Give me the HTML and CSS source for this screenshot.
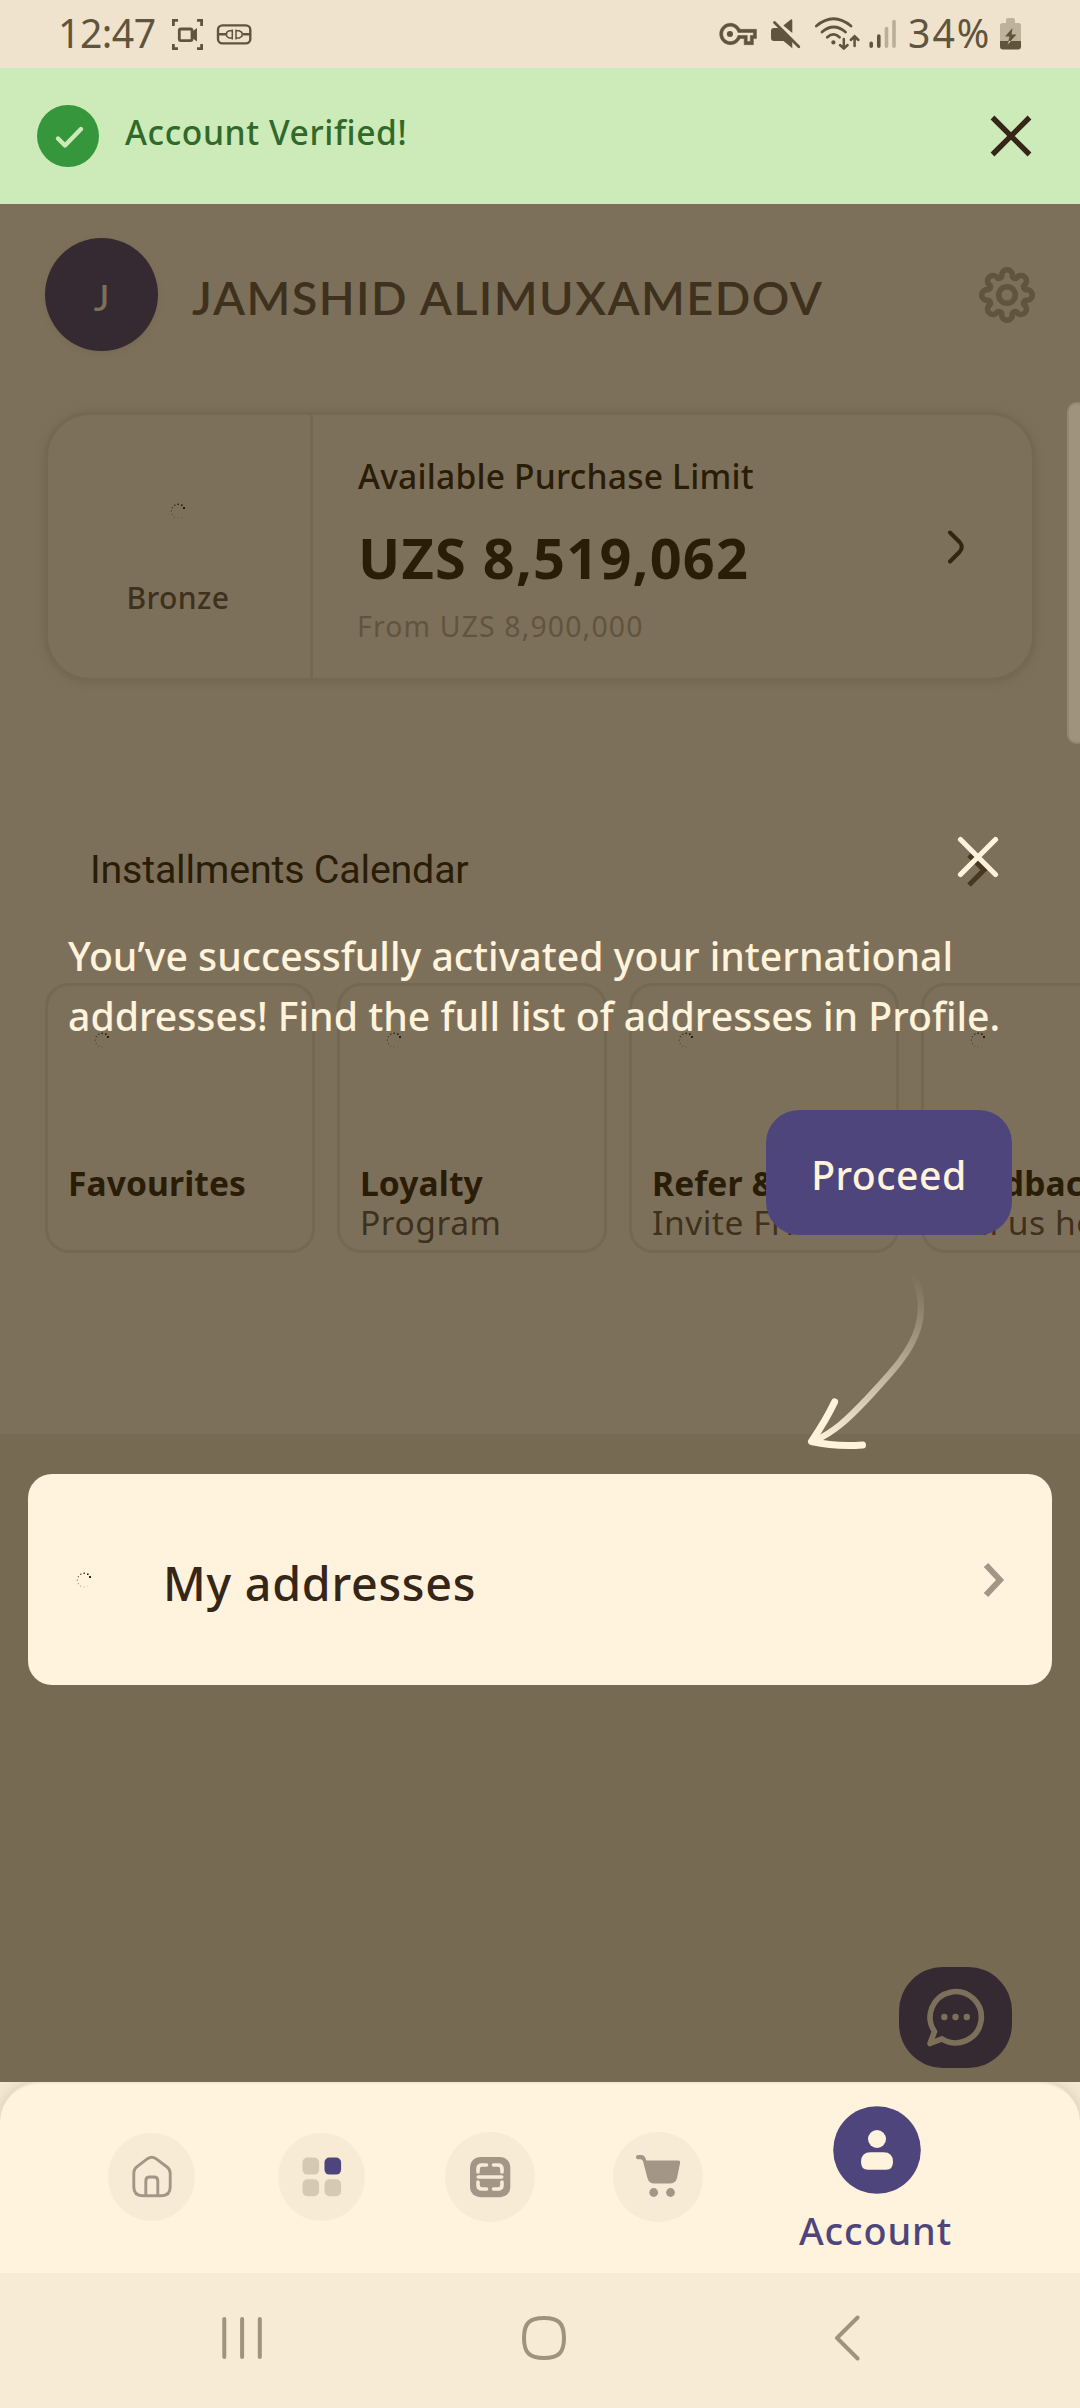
FILE: index.html
```html
<!DOCTYPE html>
<html lang="en">
<head>
<meta charset="utf-8">
<title>Account</title>
<link rel="stylesheet" href="styles.css">
</head>
<body>
<svg class="defs" width="0" height="0">
  <symbol id="spinner" viewBox="0 0 16 16">
    <rect x="13" y="4" width="2" height="2" opacity="1"/>
    <rect x="11" y="1.4" width="1.6" height="1.6" opacity="1"/>
    <rect x="7.4" y="0.6" width="1.6" height="1.4" opacity=".9"/>
    <rect x="4" y="1.6" width="1.5" height="1.3" opacity=".75"/>
    <rect x="1.8" y="4" width="1.2" height="1.3" opacity=".65"/>
    <rect x="0.8" y="7.5" width="1.1" height="1.3" opacity=".55"/>
    <rect x="1.8" y="11" width="1.1" height="1.2" opacity=".45"/>
    <rect x="4" y="13.6" width="1.1" height="1.1" opacity=".35"/>
    <rect x="7.5" y="14.4" width="1.1" height="1.1" opacity=".25"/>
    <rect x="11" y="13.6" width="1.1" height="1.1" opacity=".15"/>
  </symbol>
</svg>
<div class="screen">
  <div class="statusbar">
    <span class="time">12:47</span>
    <svg width="82" height="68" viewBox="172 0 82 68" fill="none" stroke="#61543c" stroke-width="2.8">
      <path d="M173.400 26V20.400H178M197 20.400H201.600V26M201.600 44V48.600H197M178 48.600H173.400V44"/>
      <rect x="179.300" y="29" width="12.700" height="11.600" rx="1.500"/>
      <path d="M192 32.500L196.200 29.500V40L192 37" fill="#61543c" stroke-width="1.500"/>
      <rect x="218" y="25.400" width="32.300" height="18" rx="4.500" stroke-width="2.400"/>
      <path d="M218 34.300H226M242.500 34.300H250" stroke-width="2.400"/>
      <path d="M232.300 29.500V39.500M232.300 30.800H229L226.600 32.500V36.200L229 38H232.300M236 29.500V39.500M236 30.800H239.400L242 32.500V36.200L239.400 38H236" stroke-width="1.500"/>
    </svg>
    <svg class="status-right" width="190" height="68" viewBox="715 0 190 68" fill="none" stroke="#61543c">
      <g transform="translate(719.700 15.600) scale(1.530)" fill="#61543c" stroke="none">
        <path fill-rule="evenodd" d="M22 19h-6v-4h-2.680c-1.140 2.420-3.600 4-6.320 4-3.860 0-7-3.140-7-7s3.140-7 7-7c2.720 0 5.170 1.580 6.320 4H24v6h-2v4zm-4-2h2v-4h2v-2H11.940l-.23-.67C11.010 8.340 9.110 7 7 7c-2.760 0-5 2.240-5 5s2.240 5 5 5c2.110 0 4.010-1.340 4.710-3.330l.23-.67H18v4z" stroke="#61543c" stroke-width=".35"/>
        <circle cx="6.700" cy="12" r="2"/>
      </g>
      <g fill="#61543c" stroke="none">
        <path d="M774 28h4.500L792.300 41.500V48.300L783.500 41H774q-3 0-3-3v-7q0-3 3-3zM783.300 25.500L790.500 19.700q1.800-1 1.800 1V33z"/>
      </g>
      <path d="M774.500 22.500L798.800 46.800" stroke-width="2.800" stroke-linecap="round"/>
      <g stroke-width="2.800" stroke-linecap="round">
        <path d="M816.300 26Q833.500 11.500 851 26M822 32Q833.500 22 845.500 32M827.300 37.300Q833.500 31.500 839.500 37.300"/>
        <path d="M843.800 39V48.500M840 45L843.800 48.600L847.600 45M854.600 46V36.500M850.800 40L854.600 36.300L858.400 40" stroke-width="2.500"/>
      </g>
      <circle cx="833.400" cy="42.400" r="2.100" fill="#61543c" stroke="none"/>
      <g stroke-width="3.600" stroke-linecap="round">
        <path d="M871.200 43.300V46.300M878.800 36V46.300"/>
        <path d="M886.500 28.500V46.300M894 21.500V46.300" stroke="#bbae97"/>
      </g>
    </svg>
    <span class="percent">34%</span>
    <svg width="21" height="68" viewBox="0 0 21 68">
      <path d="M6 20q0-2 2-2h5q2 0 2 2v3h3.500q2.500 0 2.500 2.500V41H0V25.500Q0 23 2.500 23H6z" fill="#bfb29b"/>
      <path d="M0 41H21V46.500q0 3-3 3H3q-3 0-3-3z" fill="#61543c"/>
      <path d="M12.500 28L5 36.500H9.500L7.500 44.500L16.500 34.500H11.500z" fill="#61543c"/>
      <path d="M9.100 41L7.500 44.500L10.800 41z" fill="#f0e3cd"/>
    </svg>
  </div>

  <div class="banner">
    <svg width="62" height="62" viewBox="0 0 62 62">
      <circle cx="31" cy="31" r="31" fill="#36963b"/>
      <path d="M21 33.500L28 40.500L44 24" fill="none" stroke="#cdebb9" stroke-width="4.400" stroke-linecap="round" stroke-linejoin="round"/>
    </svg>
    <span class="banner-text">Account Verified!</span>
    <svg width="42" height="42" viewBox="0 0 42 42" fill="none" stroke="#352617" stroke-width="5.400"><path d="M2.500 2.500L39.500 39.500M39.500 2.500L2.500 39.500"/></svg>
  </div>

  <main class="content">
    <div class="profile">
      <div class="avatar">J</div>
      <h1 class="name">JAMSHID ALIMUXAMEDOV</h1>
      <svg width="56" height="56" viewBox="-28 -28 56 56" fill="none" stroke="#61543f" stroke-width="5.600" stroke-linejoin="round">
        <path d="M18.790-5.210A5.340 5.340 0 1 1 18.790 5.210A3 3 0 0 0 16.970 9.600A5.340 5.340 0 1 1 9.600 16.970A3 3 0 0 0 5.210 18.790A5.340 5.340 0 1 1-5.210 18.790A3 3 0 0 0-9.600 16.970A5.340 5.340 0 1 1-16.970 9.600A3 3 0 0 0-18.790 5.210A5.340 5.340 0 1 1-18.790-5.210A3 3 0 0 0-16.970-9.600A5.340 5.340 0 1 1-9.600-16.970A3 3 0 0 0-5.210-18.790A5.340 5.340 0 1 1 5.210-18.790A3 3 0 0 0 9.600-16.970A5.340 5.340 0 1 1 16.970-9.600A3 3 0 0 0 18.790-5.210Z"/>
        <circle r="8.300"/>
      </svg>
    </div>

    <section class="limit-card">
      <div class="tier">
        <svg class="spinner" width="16" height="16" fill="#2a1d08"><use href="#spinner"/></svg>
        <span class="tier-name">Bronze</span>
      </div>
      <div class="limit">
        <div class="limit-text">
          <div class="limit-label">Available Purchase Limit</div>
          <div class="limit-value">UZS 8,519,062</div>
          <div class="limit-from">From UZS 8,900,000</div>
        </div>
        <svg width="18" height="36" viewBox="0 0 18 36" fill="none" stroke="#33260f" stroke-width="4" stroke-linecap="round"><path d="M3 3.500L12.500 13Q17 18 12.500 23L3 32.500"/></svg>
      </div>
    </section>

    <div class="calendar-row">
      <span>Installments Calendar</span>
      <svg width="21" height="34" viewBox="0 0 21 34" fill="none" stroke="#46391f" stroke-width="5"><path d="M2 2L17 17L2 32"/></svg>
    </div>

    <div class="tiles">
      <div class="tile"><svg class="spinner" width="16" height="16"><use href="#spinner"/></svg><b>Favourites</b><span></span></div>
      <div class="tile"><svg class="spinner" width="16" height="16"><use href="#spinner"/></svg><b>Loyalty</b><span>Program</span></div>
      <div class="tile"><svg class="spinner" width="16" height="16"><use href="#spinner"/></svg><b>Refer &amp;</b><span>Invite Friends</span></div>
      <div class="tile"><svg class="spinner" width="16" height="16"><use href="#spinner"/></svg><b>Feedback</b><span>Tell us how</span></div>
    </div>

    <section class="menu">
      <div class="menu-item">
        <svg width="16" height="16" fill="#352617"><use href="#spinner"/></svg>
        <span>My addresses</span>
        <svg width="22" height="36" viewBox="0 0 22 36" fill="none" stroke="#a39686" stroke-width="6"><path d="M3 3L17 18L3 33"/></svg>
      </div>
    </section>
  </main>

  <div class="tabs-area">
  <nav class="tabs">
    <div class="tab"><svg width="87" height="88" viewBox="107.500 2133 87 88" fill="none" stroke="#a39686" stroke-width="2.900">
      <path d="M133.300 2173Q133.300 2169.500 136 2167L147 2158.700Q151.200 2155.800 155.500 2158.700L166.500 2167Q169.700 2169.500 169.700 2173V2187Q169.700 2195.700 161 2195.700H142Q133.300 2195.700 133.300 2187ZM145.300 2195.500V2181Q145.300 2177 149 2177H153.500Q157.300 2177 157.300 2181V2195.500"/></svg></div>
    <div class="tab"><svg width="87" height="88" viewBox="277.500 2133 87 88" fill="#d5c9b3">
      <rect x="302" y="2157.600" width="16.600" height="17" rx="5"/><rect x="324" y="2157.600" width="16.600" height="17" rx="5" fill="#4e457c"/><rect x="302" y="2179.300" width="16.600" height="17" rx="5"/><rect x="324" y="2179.300" width="16.600" height="17" rx="5"/></svg></div>
    <div class="tab tab-large"><svg width="90" height="90" viewBox="445 2132 90 90">
      <rect x="470" y="2157" width="40.300" height="40.300" rx="10" fill="#a39686"/>
      <rect x="481" y="2168" width="18" height="18" rx="3" fill="#a39686"/>
      <path d="M478 2172V2169Q478 2165 482 2165H486.500M493.500 2165H498Q502 2165 502 2169V2172M502 2182V2185Q502 2189 498 2189H493.500M486.500 2189H482Q478 2189 478 2185V2182M478.300 2177H501.700" fill="none" stroke="#f7ebd6" stroke-width="3.600" stroke-linecap="round"/></svg></div>
    <div class="tab tab-large"><svg width="90" height="90" viewBox="613 2132 90 90" fill="#a39686">
      <path d="M636 2160.200Q636 2158.200 637.700 2158.200H641Q645 2158.200 646.300 2163.300H678.500Q680.300 2163.300 680.200 2165L677 2180Q675.500 2185 669.500 2185H654.500Q649 2185 647.500 2180L643 2164Q642.300 2162.200 640.500 2162.200H637.700Q636 2162.200 636 2160.200Z" transform="translate(0 -3.300) translate(0 2154.900) scale(1 1.060) translate(0 -2154.900)"/>
      <circle cx="653.700" cy="2192.500" r="4.400"/><circle cx="670.500" cy="2192.500" r="4.400"/></svg></div>
    <div class="tab-active">
      <svg width="88" height="88" viewBox="0 0 88 88"><circle cx="44" cy="44" r="43.800" fill="#4e457c"/><g fill="#fff3dd"><circle cx="44" cy="33" r="9"/><path d="M28 56Q28 46.300 37.500 46.300H50.500Q60 46.300 60 56Q60 63.800 53 63.800H35Q28 63.800 28 56Z"/></g></svg>
      <span>Account</span>
    </div>
  </nav>
  </div>

  <div class="sysbar">
    <svg width="1080" height="135" viewBox="0 2273 1080 135" fill="none" stroke="#a0937b" stroke-width="4" stroke-linecap="round" stroke-linejoin="round">
      <path d="M224.300 2319V2357M242.100 2319V2357M259.800 2319V2357"/>
      <path d="M544 2318Q555 2318 559.500 2322.500Q564 2327 564 2338Q564 2349 559.500 2353.500Q555 2358 544 2358Q533 2358 528.500 2353.500Q524 2349 524 2338Q524 2327 528.500 2322.500Q533 2318 544 2318Z"/>
      <path d="M857.600 2317.500L837 2338L857.600 2358.500"/>
    </svg>
  </div>

  <div class="edge-handle"></div>

  <div class="coach">
    <svg class="coach-close" width="42" height="42" viewBox="0 0 42 42" fill="none" stroke="#fff3dc" stroke-width="5.200" stroke-linecap="round"><path d="M3.500 3.500L38.500 38.500M38.500 3.500L3.500 38.500"/></svg>
    <p class="coach-text">You’ve successfully activated your international<br>addresses! Find the full list of addresses in Profile.</p>
    <button class="proceed">Proceed</button>
    <svg class="coach-arrow" width="130" height="190" viewBox="800 1265 130 190" fill="none" stroke-linecap="round">
      <defs><linearGradient id="fade" gradientUnits="userSpaceOnUse" x1="815" y1="1440" x2="915" y2="1275"><stop offset="0" stop-color="#fff3dc"/><stop offset="1" stop-color="#fff3dc" stop-opacity="0"/></linearGradient></defs>
      <path d="M912.500 1272Q926 1300 918 1328C910 1354 890 1374 866 1400C848 1419 834 1432 816 1440" stroke="url(#fade)" stroke-width="6.400"/>
      <path d="M834.600 1402Q826 1420 811.500 1441.500Q836 1447 862.500 1445" stroke="#fff3dc" stroke-width="7" stroke-linejoin="round"/>
    </svg>
  </div>

  <div class="chat">
    <svg width="60" height="60" viewBox="925 1987 60 60" fill="none" stroke="#7d705a" stroke-width="5.600" stroke-linejoin="round">
      <path d="M934.500 2031.500A25.600 25.600 0 1 1 942 2038.800L930 2043.500Z"/>
      <g fill="#7d705a" stroke="none"><circle cx="944.300" cy="2017" r="3.200"/><circle cx="955.500" cy="2017" r="3.200"/><circle cx="966.800" cy="2017" r="3.200"/></g>
    </svg>
  </div>
</div>
</body>
</html>
```
FILE: styles.css
```css
* { box-sizing: border-box; margin: 0; padding: 0; }
body { font-family: "Noto Sans", sans-serif; color: #2a1d08; }
svg { display: block; flex: none; }
.defs { position: absolute; }

.screen { position: relative; width: 1080px; height: 2408px; overflow: hidden; display: flex; flex-direction: column; background: #f0e3cd; }

.statusbar { height: 68px; flex: none; display: flex; padding: 0 59px 0 58px; background: #f0e3cd; color: #61543c; font-size: 39.2px; line-height: 66px; white-space: nowrap; }
.time { width: 114px; letter-spacing: -.5px; }
.status-right { margin-left: auto; }
.percent { width: 95px; padding-left: 3px; letter-spacing: 2px; }

.banner { height: 136px; flex: none; display: flex; align-items: center; padding: 0 48px 0 37px; background: #cdebb9; }
.banner-text { flex: 1; margin: -9px 0 0 26px; font-size: 33.6px; font-weight: 500; line-height: 44px; letter-spacing: .6px; color: #30692a; }

.content { height: 1878px; flex: none; display: flex; flex-direction: column; background: #7d705a; overflow: hidden; }

.profile { display: flex; align-items: center; height: 113px; margin: 34px 45px 0; }
.avatar { width: 113px; height: 113px; border-radius: 50%; background: #352932; color: #7d705a; font: 500 37px/117px Lato, sans-serif; text-align: center; box-shadow: 0 2px 5px rgba(117,104,78,.8); }
.name { flex: 1; padding: 5px 0 0 34px; font: 600 46.8px/60px Lato, sans-serif; letter-spacing: 1.45px; color: #3e311d; white-space: nowrap; }

.limit-card { display: flex; flex: none; height: 269px; margin: 61px 45px 0; border: 3px solid #756852; border-radius: 45px; box-shadow: 0 1px 9px #716449; }
.tier { display: flex; flex-direction: column; align-items: center; width: 265px; border-right: 3px solid #756852; padding: 88px 2px 0 0; }
.tier-name { margin-top: 59px; font-size: 30.1px; font-weight: 500; line-height: 40px; letter-spacing: .4px; color: #3e311d; }
.limit { flex: 1; display: flex; align-items: center; padding: 0 67px 0 45px; }
.limit-text { flex: 1; align-self: flex-start; padding-top: 39px; white-space: nowrap; }
.limit-label { font-size: 33.6px; font-weight: 500; line-height: 44px; letter-spacing: .2px; }
.limit-value { margin-top: 26.5px; font-size: 55.9px; font-weight: 700; line-height: 64px; letter-spacing: 1.2px; }
.limit-from { margin-top: 19.5px; font-size: 28.4px; font-weight: 450; line-height: 36px; letter-spacing: 1.15px; color: #61543f; margin-left: -1px; }

.calendar-row { display: flex; flex: none; align-items: center; justify-content: space-between; height: 60px; margin: 159px 92px 0 90px; font: 400 39.4px/62px Roboto, sans-serif; letter-spacing: -.2px; }

.tiles { display: flex; flex: none; gap: 22px; margin: 83px 0 0 45px; }
.tile { flex: none; width: 270px; height: 270px; border: 3px solid #756852; border-radius: 24px; padding: 46px 0 0 20px; display: flex; flex-direction: column; font-size: 33.6px; line-height: 39px; white-space: nowrap; fill: #2a1d08; }
.tile .spinner { margin: 0 0 116px 26px; }
.tile b { letter-spacing: .1px; }
.tile span { color: #3e311d; letter-spacing: .5px; }

.menu { flex: 1; margin-top: 181px; padding: 40px 28px; background: #776a53; }
.menu-item { display: flex; align-items: center; height: 211px; padding: 0 47px 0 48px; border-radius: 24px; background: #fff3dd; color: #352617; font-size: 46.6px; font-weight: 500; letter-spacing: .75px; }
.menu-item span { flex: 1; margin: 6px 0 0 71px; line-height: 60px; }

.tabs-area { flex: none; overflow: hidden; background: #f4e8d2; }
.tabs { height: 191px; display: flex; align-items: flex-start; border-radius: 40px 40px 0 0; background: #fff3dd; box-shadow: 0 0 14px #d6c9b2; border-top: 2px solid #f6e9d3; padding-left: 107.5px; }
.tab { width: 87px; height: 88px; margin: 49px 83px 0 0; border-radius: 50%; background: #f7ebd6; }
.tab-large { width: 90px; height: 90px; margin: 48px 78px 0 -3px; }
.tab-large + .tab-large { margin: 48px 95px 0 0; }
.tab-active { width: 158px; padding-top: 22px; display: flex; flex-direction: column; align-items: center; font-size: 37.8px; font-weight: 500; letter-spacing: .9px; line-height: 44px; color: #4e457c; }
.tab-active span { margin: 15px 0 0 -2px; }

.sysbar { height: 135px; flex: none; background: #f7ebd6; }

.edge-handle { position: absolute; left: 1067px; top: 402px; width: 20px; height: 342px; border-radius: 12px; background: #a0937d; border: 2px solid #958871; }

.coach { position: absolute; inset: 0; }
.coach-close { position: absolute; left: 957px; top: 836px; }
.coach-text { position: absolute; left: 68px; top: 926px; font-size: 39.2px; font-weight: 500; line-height: 60px; letter-spacing: 0; color: #fff3dc; white-space: nowrap; }
.proceed { position: absolute; left: 766px; top: 1110px; width: 246px; height: 125px; border: 0; border-radius: 33px; background: #4e457c; color: #fff3dc; font: 500 39.2px/60px "Noto Sans", sans-serif; letter-spacing: .5px; padding-top: 5px; }
.coach-arrow { position: absolute; left: 800px; top: 1265px; }
.chat { position: absolute; left: 899px; top: 1967px; width: 113px; height: 101px; border-radius: 44px; background: #352932; padding: 20px 0 0 26px; }
```
